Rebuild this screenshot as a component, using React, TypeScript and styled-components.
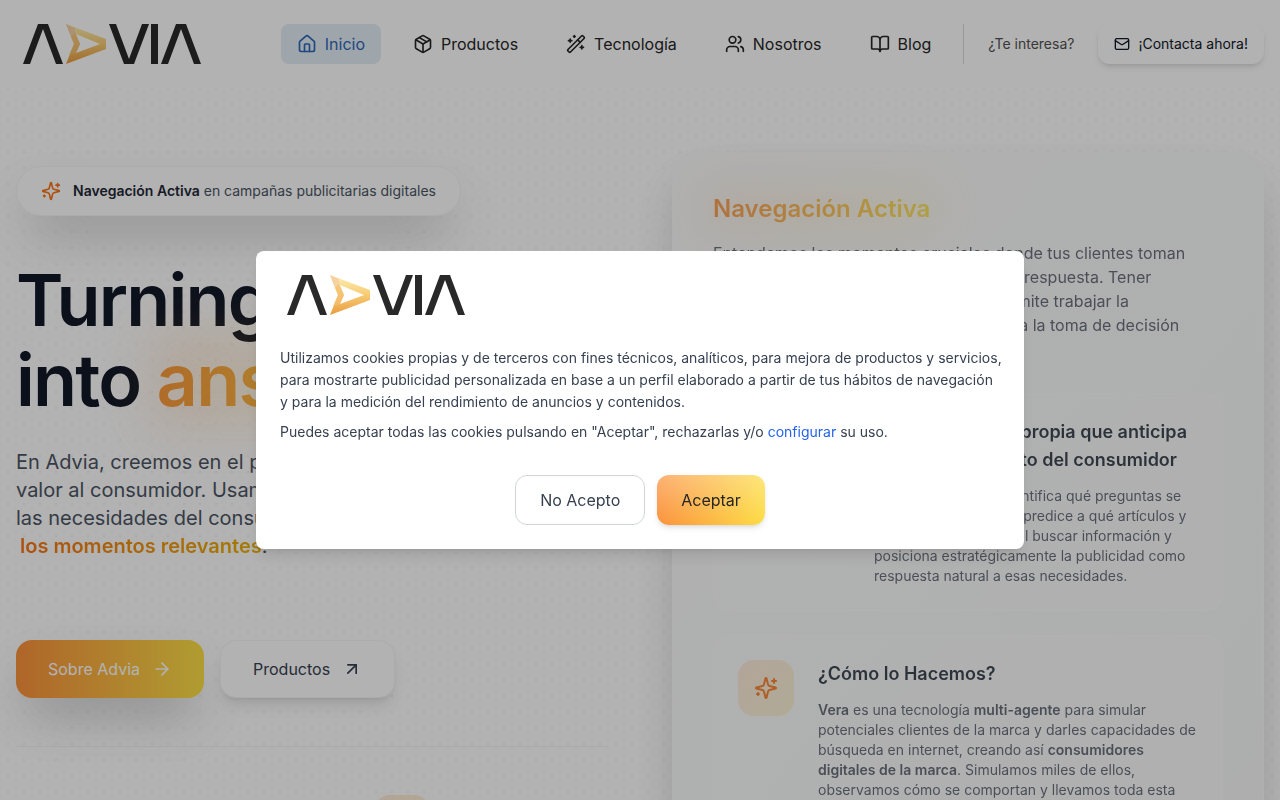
import React from "react";
import styled, { createGlobalStyle, css } from "styled-components";
import {
  ArrowRight,
  ArrowUpRight,
  BookOpen,
  Brain,
  House,
  Mail,
  Package,
  Target,
  Users,
  WandSparkles,
} from "lucide-react";

const GlobalStyle = createGlobalStyle`
  *, *::before, *::after { box-sizing: border-box; }
  body {
    margin: 0;
    overflow: hidden;
    background: #ffffff;
    color: #262626;
    font-family: Inter, "Liberation Sans", sans-serif;
    font-size: 16px;
    line-height: 24px;
  }
  h1, h2, h3, p { margin: 0; }
  a { color: inherit; text-decoration: none; }
  button { font: inherit; cursor: pointer; }
`;

const Page = styled.div`
  height: 100vh;
  overflow: hidden;
`;

const Header = styled.header`
  display: flex;
  align-items: center;
  justify-content: space-between;
  padding: 24px 16px;
`;

const HeaderSide = styled.div`
  display: flex;
  align-items: center;
  gap: 16px;
`;

const Nav = styled.nav`
  display: flex;
  gap: 16px;
`;

const NavLink = styled.a<{ $active?: boolean }>`
  display: flex;
  align-items: center;
  gap: 8px;
  height: 40px;
  padding: 0 16px;
  border-radius: 8px;
  color: ${(p) => (p.$active ? "#2f68b8" : "#262626")};
  background: ${(p) => (p.$active ? "#e3edf5" : "transparent")};
`;

const ContactArea = styled.div`
  display: flex;
  align-items: center;
  gap: 24px;
  height: 40px;
  padding-left: 24px;
  border-left: 1px solid #dcdcdf;
  font-size: 14px;
  line-height: 20px;
  color: #525252;
`;

const ContactButton = styled.button`
  display: flex;
  align-items: center;
  gap: 8px;
  height: 40px;
  padding: 0 16px;
  border: 0;
  border-radius: 12px;
  background: #ffffff;
  color: #111827;
  box-shadow: 0 4px 6px -1px rgba(0, 0, 0, 0.1), 0 2px 4px -2px rgba(0, 0, 0, 0.1);
`;

const Hero = styled.main`
  display: grid;
  grid-template-columns: 1fr 1fr;
  gap: 64px;
  padding: 64px 16px;
  background: radial-gradient(circle at 8px 8px, #f2f2f4 1px, transparent 1px) 0 8px / 16px 16px;
`;

const Intro = styled.section`
  min-width: 0;
  padding-top: 14px;
`;

const Badge = styled.p`
  display: flex;
  align-items: center;
  gap: 12px;
  width: fit-content;
  height: 50px;
  padding: 0 24px;
  border: 1px solid #f6f6f8;
  border-radius: 25px;
  background: #ffffff;
  font-size: 14px;
  line-height: 20px;
  color: #4b5563;
  box-shadow: 0 25px 50px -12px rgba(0, 0, 0, 0.25);
  strong { font-weight: 600; color: #1f2937; }
  svg { color: #f97316; }
`;

const Title = styled.h1`
  margin-top: 44px;
  font-size: 72px;
  line-height: 80px;
  font-weight: 600;
  letter-spacing: -0.025em;
  color: #111827;
  white-space: nowrap;
`;

const Glow = styled.span`
  position: relative;
  z-index: 0;
  &::before {
    content: "";
    position: absolute;
    inset: -8px;
    z-index: -1;
    background: linear-gradient(to right, #fb923c, #fde047);
    opacity: 0.15;
    filter: blur(24px);
  }
`;

const gradientText = css`
  color: transparent;
  background-clip: text;
  -webkit-background-clip: text;
`;

const Answers = styled.span`
  ${gradientText}
  background-image: linear-gradient(to right, #fb9a3c, #fde047);
`;

const Lead = styled.p`
  margin-top: 28px;
  font-size: 20px;
  line-height: 28px;
  color: #4b5563;
  white-space: nowrap;
`;

const Moments = styled.strong`
  ${gradientText}
  padding-left: 4px;
  font-weight: 600;
  background-image: linear-gradient(to right, #f97316, #eab308);
`;

const Actions = styled.div`
  display: flex;
  gap: 16px;
  margin-top: 80px;
`;

const ActionLink = styled.a<{ $primary?: boolean }>`
  display: flex;
  align-items: center;
  gap: 12px;
  height: 58px;
  padding: 0 32px;
  border-radius: 16px;
  ${(p) =>
    p.$primary
      ? css`
          color: #ffffff;
          background: linear-gradient(to right, #fb923c, #fde047);
          box-shadow: 0 25px 50px -12px rgba(0, 0, 0, 0.25);
        `
      : css`
          color: #374151;
          background: #ffffff;
          border: 1px solid #f6f6f8;
          box-shadow: 0 10px 15px -3px rgba(0, 0, 0, 0.1), 0 4px 6px -4px rgba(0, 0, 0, 0.1);
        `}
`;

const Stats = styled.div`
  display: grid;
  grid-template-columns: 3fr 2fr;
  gap: 8px;
  margin-top: 48px;
  padding-top: 48px;
  border-top: 1px solid #f3f4f6;
`;

const Stat = styled.div`
  display: flex;
`;

const IconTile = styled.span`
  display: flex;
  align-items: center;
  justify-content: center;
  flex: none;
  width: 56px;
  height: 56px;
  border-radius: 16px;
  background: linear-gradient(to bottom right, #ffead9, #fdf3d0);
  color: #f97316;
`;

const Panel = styled.section`
  min-width: 0;
  height: fit-content;
  padding: 40px;
  border: 1px solid #fcfcfc;
  border-radius: 24px;
  background: linear-gradient(to bottom right, #fdfdfd, #f9fafa);
  box-shadow: 0 25px 50px -12px rgba(0, 0, 0, 0.25);
  opacity: 0.85;
`;

const PanelTitle = styled.h2`
  font-size: 24px;
  line-height: 32px;
  font-weight: 600;
`;

const PanelTitleText = styled.span`
  ${gradientText}
  background-image: linear-gradient(to right, #fb923c, #fde047);
`;

const PanelText = styled.p`
  margin-top: 16px;
  color: #525a67;
  white-space: nowrap;
`;

const Cards = styled.div`
  display: grid;
  gap: 24px;
  margin-top: 32px;
`;

const Card = styled.article`
  display: flex;
  align-items: flex-start;
  gap: 24px;
  padding: 24px;
  border: 1px solid #ffffff;
  border-radius: 16px;
  background: rgba(255, 255, 255, 0.6);
`;

const CardMedia = styled.span`
  display: flex;
  flex: none;
  justify-content: center;
  width: 112px;
`;

const CardTitle = styled.h3`
  font-size: 18px;
  line-height: 28px;
  font-weight: 600;
  color: #1f2937;
`;

const CardText = styled.p`
  margin-top: 12px;
  font-size: 14px;
  line-height: 20px;
  color: #525a67;
  strong { font-weight: 600; }
`;

const Overlay = styled.div`
  position: fixed;
  inset: 0;
  z-index: 10;
  display: flex;
  align-items: center;
  justify-content: center;
  padding: 16px;
  background: rgba(0, 0, 0, 0.3);
`;

const Dialog = styled.div`
  width: 100%;
  max-width: 768px;
  padding: 24px;
  border-radius: 8px;
  background: #ffffff;
  box-shadow: 0 10px 15px -3px rgba(0, 0, 0, 0.1), 0 4px 6px -4px rgba(0, 0, 0, 0.1);
  color: #374151;
`;

const DialogCopy = styled.div`
  display: grid;
  gap: 8px;
  margin-top: 32px;
  font-size: 14px;
  line-height: 22px;
  a { color: #2563eb; }
  @media (min-width: 800px) { white-space: nowrap; }
`;

const DialogActions = styled.div`
  display: flex;
  justify-content: center;
  gap: 12px;
  margin-top: 32px;
`;

const DialogButton = styled.button<{ $accept?: boolean }>`
  height: 50px;
  padding: 0 24px;
  border-radius: 12px;
  ${(p) =>
    p.$accept
      ? css`
          border: 0;
          color: #262626;
          background: linear-gradient(to top, transparent, rgba(255, 255, 255, 0.3)),
            linear-gradient(to right, #fb923c, #fddc43);
          box-shadow: 0 4px 6px -1px rgba(0, 0, 0, 0.1), 0 2px 4px -2px rgba(0, 0, 0, 0.1);
        `
      : css`
          border: 1px solid #d1d5db;
          color: #374151;
          background: #ffffff;
        `}
`;

const LogoSvg = styled.svg`
  display: block;
  width: 193px;
  height: 40px;
`;

function Logo({ id }: { id: string }) {
  return (
    <LogoSvg viewBox="0 0 193 40" role="img" aria-label="Advia">
      <defs>
        <linearGradient id={id} x1="0" y1="0" x2="0" y2="1">
          <stop offset="0" stopColor="#fdf0b4" />
          <stop offset="0.5" stopColor="#f6cb74" />
          <stop offset="1" stopColor="#eb9a3c" />
        </linearGradient>
      </defs>
      <path fill="#292929" d="M7 40 22 0h10l15 40h-7L27 5 14 40Z" />
      <path
        fill={`url(#${id})`}
        fillRule="evenodd"
        d="M50 0 90 15v10L50 40l8-20ZM60 10l4 10-4 9 24-9Z"
      />
      <path fill="#f7d0a4" d="m50 0 9 4v6l-4 3Z" />
      <path fill="#f4bf72" d="m55 13 4-4 5 11-4 9-7 2 5-11Z" opacity="0.7" />
      <path fill="#292929" d="M93 0h7l13 35L126 0h7l-15 40h-10Z" />
      <path fill="#292929" d="M135 0h7v40h-7Z" />
      <path fill="#292929" d="M145 40 160 0h10l15 40h-7L165 5l-13 35Z" />
    </LogoSvg>
  );
}

function SparklesIcon({ size }: { size: number }) {
  return (
    <svg
      width={size}
      height={size}
      viewBox="0 0 24 24"
      fill="none"
      stroke="currentColor"
      strokeWidth="2"
      strokeLinecap="round"
      strokeLinejoin="round"
      aria-hidden="true"
    >
      <path d="M9.937 15.5A2 2 0 0 0 8.5 14.063l-6.135-1.582a.5.5 0 0 1 0-.962L8.5 9.936A2 2 0 0 0 9.937 8.5l1.582-6.135a.5.5 0 0 1 .963 0L14.063 8.5A2 2 0 0 0 15.5 9.937l6.135 1.581a.5.5 0 0 1 0 .964L15.5 14.063a2 2 0 0 0-1.437 1.437l-1.582 6.135a.5.5 0 0 1-.963 0z" />
      <path d="M20 3v4M22 5h-4M4 17v2M5 18H3" />
    </svg>
  );
}

export default function App() {
  return (
    <>
      <GlobalStyle />
      <Page>
        <Header>
          <a href="#inicio">
            <Logo id="logo-header" />
          </a>
          <HeaderSide>
            <Nav>
              <NavLink href="#inicio" $active>
                <House size={20} />
                Inicio
              </NavLink>
              <NavLink href="#productos">
                <Package size={20} />
                Productos
              </NavLink>
              <NavLink href="#tecnologia">
                <WandSparkles size={20} />
                Tecnología
              </NavLink>
              <NavLink href="#nosotros">
                <Users size={20} />
                Nosotros
              </NavLink>
              <NavLink href="#blog">
                <BookOpen size={20} />
                Blog
              </NavLink>
            </Nav>
            <ContactArea>
              ¿Te interesa?
              <ContactButton type="button">
                <Mail size={16} />
                ¡Contacta ahora!
              </ContactButton>
            </ContactArea>
          </HeaderSide>
        </Header>

        <Hero>
          <Intro>
            <Badge>
              <SparklesIcon size={20} />
              <span>
                <strong>Navegación Activa</strong> en campañas publicitarias digitales
              </span>
            </Badge>
            <Title>
              Turning searches
              <br />
              into{" "}
              <Glow>
                <Answers>answers</Answers>
              </Glow>
            </Title>
            <Lead>
              En Advia, creemos en el poder de aportar
              <br />
              valor al consumidor. Usamos IA para entender
              <br />
              las necesidades del consumidor y estar en
              <br />
              <Moments>los momentos relevantes</Moments>.
            </Lead>
            <Actions>
              <ActionLink href="#nosotros" $primary>
                Sobre Advia
                <ArrowRight size={20} />
              </ActionLink>
              <ActionLink href="#productos">
                Productos
                <ArrowUpRight size={20} />
              </ActionLink>
            </Actions>
            <Stats>
              <Stat />
              <Stat>
                <IconTile>
                  <Target size={24} />
                </IconTile>
              </Stat>
            </Stats>
          </Intro>

          <Panel>
            <PanelTitle>
              <Glow>
                <PanelTitleText>Navegación Activa</PanelTitleText>
              </Glow>
            </PanelTitle>
            <PanelText>
              Entendemos los momentos cruciales donde tus clientes toman
              <br />
              decisiones o buscan por internet aquella respuesta. Tener
              <br />
              presencia en todos estos momentos permite trabajar la
              <br />
              marca y acompañar mejor al cliente hasta la toma de decisión
              <br />
              final.
            </PanelText>
            <Cards>
              <Card>
                <CardMedia>
                  <IconTile>
                    <Brain size={24} />
                  </IconTile>
                </CardMedia>
                <div>
                  <CardTitle>
                    Gran Tecnología propia que anticipa
                    <br />
                    el comportamiento del consumidor
                  </CardTitle>
                  <CardText>
                    Nuestra IA Vera ya identifica qué preguntas se
                    <br />
                    hace ese consumidor, predice a qué artículos y
                    <br />
                    contenidos accederá al buscar información y
                    <br />
                    posiciona estratégicamente la publicidad como respuesta natural a esas
                    necesidades.
                  </CardText>
                </div>
              </Card>
              <Card>
                <IconTile>
                  <SparklesIcon size={24} />
                </IconTile>
                <div>
                  <CardTitle>¿Cómo lo Hacemos?</CardTitle>
                  <CardText>
                    <strong>Vera</strong> es una tecnología <strong>multi-agente</strong> para
                    simular potenciales clientes de la marca y darles capacidades de búsqueda en
                    internet, creando así <strong>consumidores digitales de la marca</strong>.
                    Simulamos miles de ellos, observamos cómo se comportan y llevamos toda esta
                    información a las campañas publicitarias.
                  </CardText>
                </div>
              </Card>
            </Cards>
          </Panel>
        </Hero>
      </Page>

      <Overlay>
        <Dialog role="dialog" aria-modal="true" aria-label="Cookies">
          <Logo id="logo-dialog" />
          <DialogCopy>
            <p>
              Utilizamos cookies propias y de terceros con fines técnicos, analíticos, para mejora
              de productos y servicios,
              <br />
              para mostrarte publicidad personalizada en base a un perfil elaborado a partir de tus
              hábitos de navegación
              <br />y para la medición del rendimiento de anuncios y contenidos.
            </p>
            <p>
              Puedes aceptar todas las cookies pulsando en "Aceptar", rechazarlas y/o{" "}
              <a href="#configurar">configurar</a> su uso.
            </p>
          </DialogCopy>
          <DialogActions>
            <DialogButton type="button">No Acepto</DialogButton>
            <DialogButton type="button" $accept>
              Aceptar
            </DialogButton>
          </DialogActions>
        </Dialog>
      </Overlay>
    </>
  );
}
